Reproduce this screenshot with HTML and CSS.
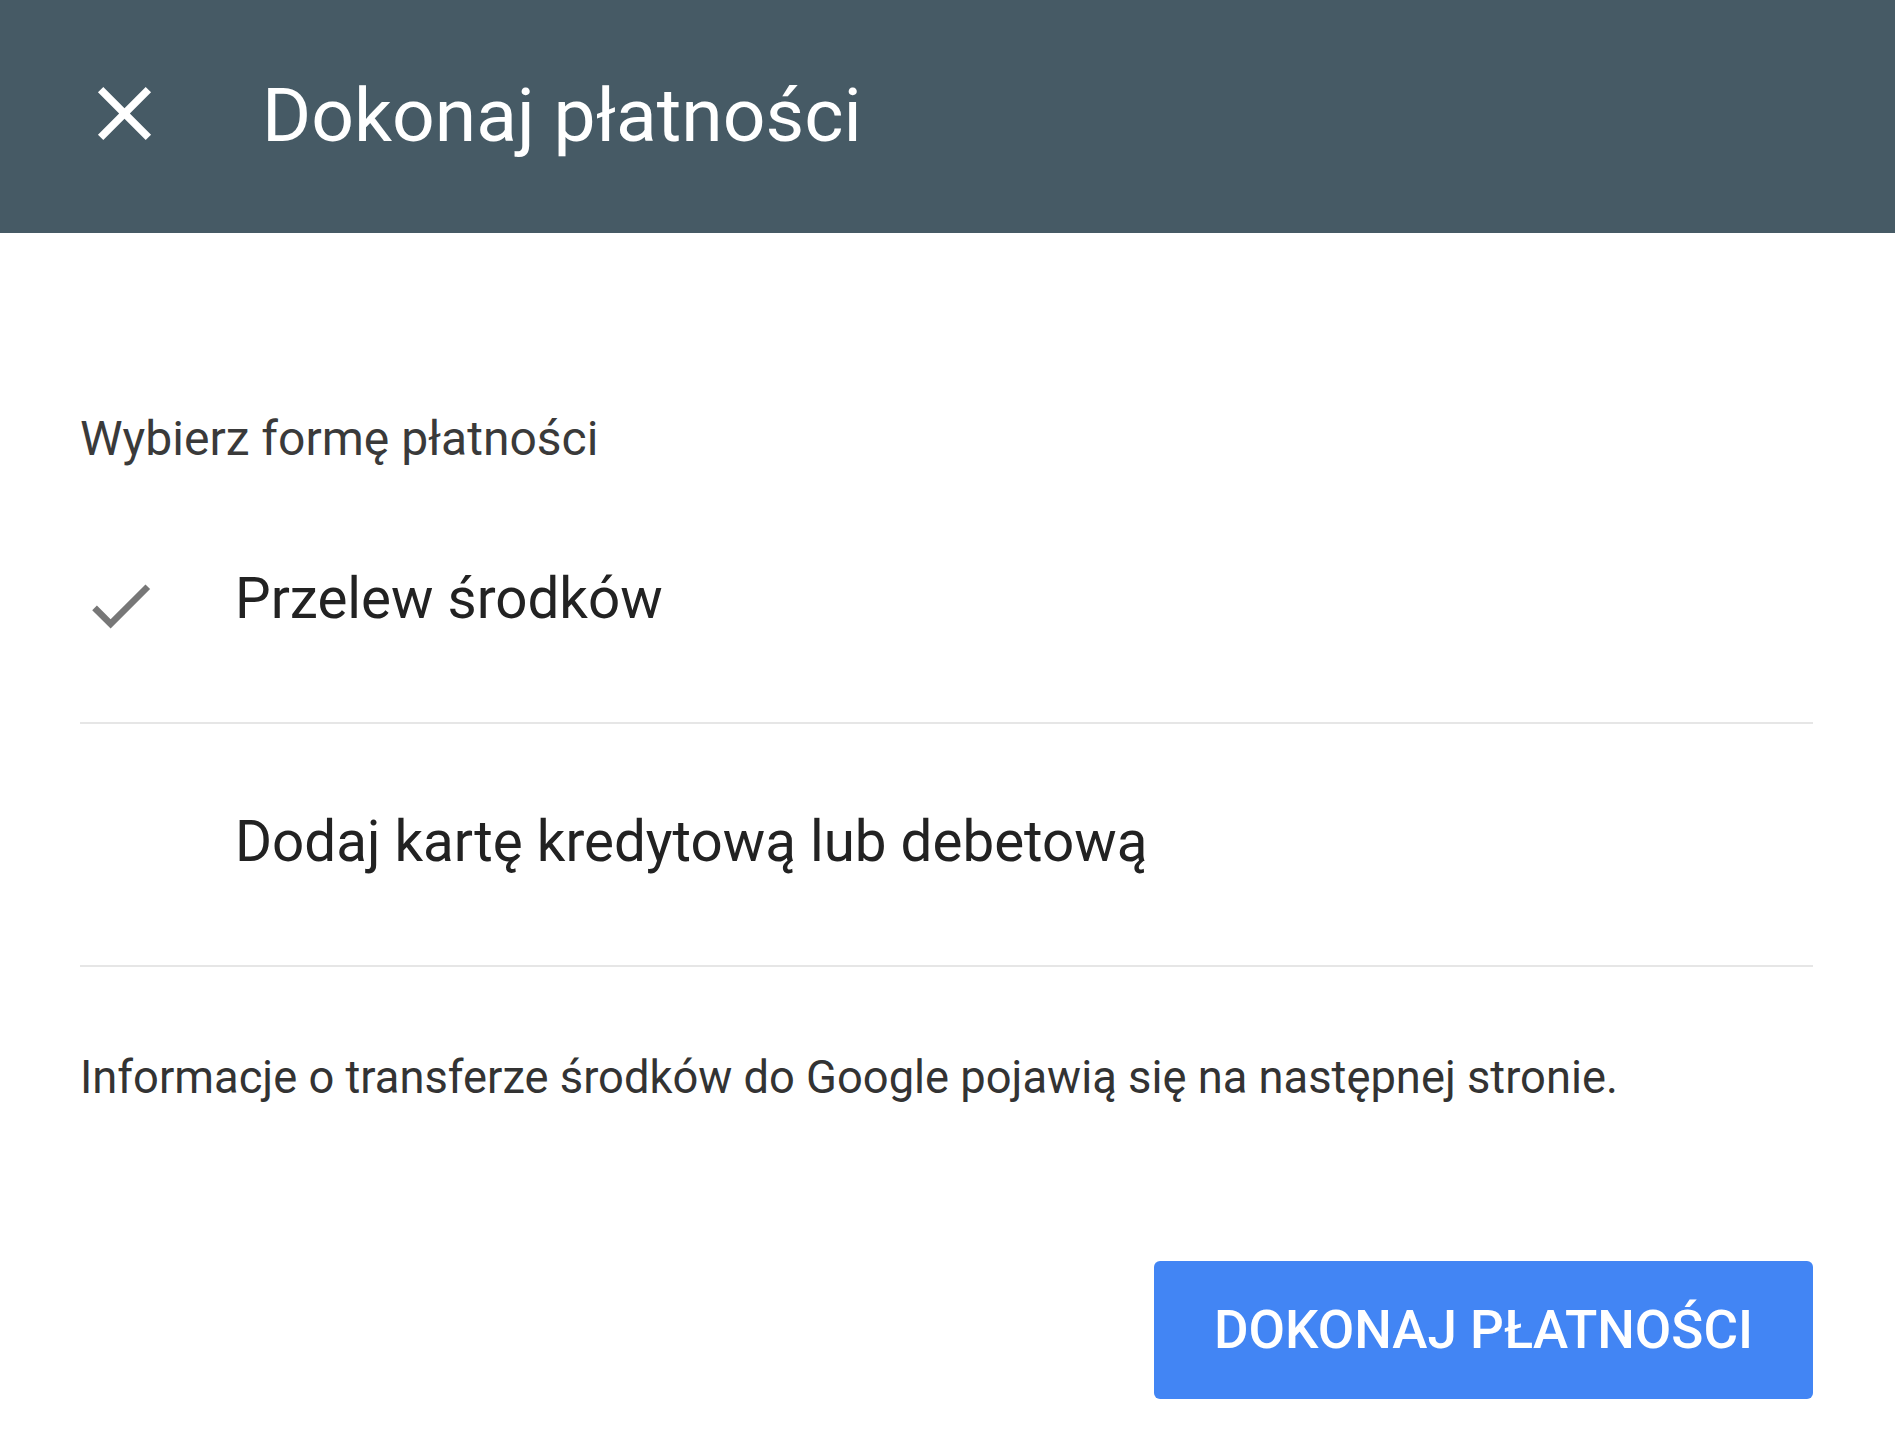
FILE: index.html
```
<!DOCTYPE html>
<html lang="pl">
<head>
<meta charset="utf-8">
<title>Dokonaj płatności</title>
<link rel="stylesheet" href="styles.css">
</head>
<body>
<header class="topbar">
  <svg class="close-icon" viewBox="0 0 24 24" aria-hidden="true"><path d="M19 6.41L17.59 5 12 10.59 6.41 5 5 6.41 10.59 12 5 17.59 6.41 19 12 13.41 17.59 19 19 17.59 13.41 12z"/></svg>
  <h1 class="title">Dokonaj płatności</h1>
</header>
<main class="content">
  <p class="subtitle">Wybierz formę płatności</p>
  <ul class="methods">
    <li class="method">
      <span class="slot"><svg class="check-icon" viewBox="0 0 24 24" aria-hidden="true"><path d="M9 16.17L4.83 12l-1.42 1.41L9 19 21 7l-1.41-1.41z"/></svg></span>
      <span class="label">Przelew środków</span>
    </li>
    <li class="method">
      <span class="slot"></span>
      <span class="label">Dodaj kartę kredytową lub debetową</span>
    </li>
  </ul>
  <p class="info">Informacje o transferze środków do Google pojawią się na następnej stronie.</p>
  <div class="actions">
    <button class="pay-btn" type="button">DOKONAJ PŁATNOŚCI</button>
  </div>
</main>
</body>
</html>
```
FILE: styles.css
```
html, body {
  margin: 0;
  padding: 0;
  background: #ffffff;
}
body {
  font-family: Roboto, "Liberation Sans", Arial, sans-serif;
  width: 1895px;
}
.topbar {
  height: 233px;
  background: #465a65;
  display: flex;
  align-items: center;
  padding-left: 79px;
  box-sizing: border-box;
}
.close-icon {
  width: 91px;
  height: 91px;
  fill: #ffffff;
  flex: none;
  margin-bottom: 6px;
}
.title {
  margin: 0 0 4px 92px;
  font-size: 75px;
  font-weight: 400;
  color: #ffffff;
  line-height: 1.2;
}
.content {
  padding: 178px 82px 0 80px;
}
.subtitle {
  margin: 0;
  font-size: 48px;
  line-height: 56px;
  color: #3a3a3a;
}
.methods {
  list-style: none;
  margin: 14px 0 0;
  padding: 0;
}
.method {
  display: flex;
  align-items: center;
  height: 241px;
  border-bottom: 2px solid #e6e6e6;
}
.slot {
  width: 155px;
  flex: none;
  display: flex;
  align-items: center;
}
.check-icon {
  width: 79px;
  height: 79px;
  fill: #777777;
  margin: 7px 0 0 1px;
}
.label {
  font-size: 56.5px;
  line-height: 68px;
  color: #222222;
  white-space: nowrap;
  margin-bottom: 6px;
}
.info {
  margin: 84px 0 0;
  font-size: 45.3px;
  line-height: 53px;
  color: #333333;
  white-space: nowrap;
}
.actions {
  display: flex;
  justify-content: flex-end;
  margin-top: 157px;
}
.pay-btn {
  width: 659px;
  height: 138px;
  border: none;
  border-radius: 6px;
  background: #4285f4;
  color: #ffffff;
  font-family: Roboto, "Liberation Sans", Arial, sans-serif;
  font-size: 53px;
  font-weight: 500;
  padding: 0;
  display: flex;
  align-items: center;
  justify-content: center;
}
```
